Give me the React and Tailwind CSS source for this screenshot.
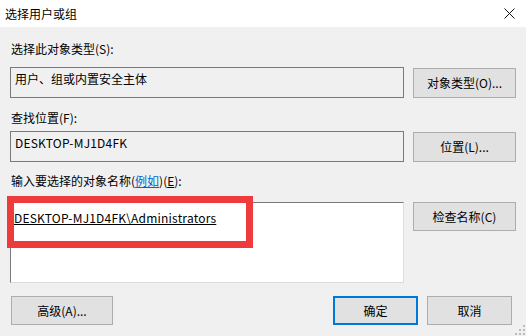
import React from "react";

const font = { fontFamily: '"Noto Sans CJK SC", "Noto Sans", sans-serif' };

function Btn({ children, className = "" }) {
  return (
    <div
      className={`flex items-center justify-center border border-[#adadad] bg-[#e1e1e1] text-[12px] leading-[16px] text-black ${className}`}
    >
      {children}
    </div>
  );
}

export default function App() {
  return (
    <div
      className="relative w-[526px] h-[336px] bg-[#f0f0f0] flex flex-col text-[12px] leading-[16px] text-black overflow-hidden"
      style={font}
    >
      {/* title bar */}
      <div className="h-[27px] bg-white flex items-center justify-between pl-[5px] pr-[11px] shrink-0">
        <span className="text-[12px]">选择用户或组</span>
        <svg width="11" height="11" viewBox="0 0 11 11">
          <path d="M0.5 0.5 L10.5 10.5 M10.5 0.5 L0.5 10.5" stroke="#111" strokeWidth="1" />
        </svg>
      </div>

      <div className="flex flex-col px-[10px]">
        <div className="mt-[14px] h-[16px] pl-[1px]">选择此对象类型(S):</div>

        <div className="mt-[10px] flex gap-[9px]">
          <div className="w-[394px] h-[31px] border border-[#7a7a7a] bg-[#f0f0f0] pl-[4px] pt-[3px]">
            用户、组或内置安全主体
          </div>
          <Btn className="w-[103px] h-[30px] mt-[1px]">对象类型(O)...</Btn>
        </div>

        <div className="mt-[12px] h-[16px] pl-[1px]">查找位置(F):</div>

        <div className="mt-[5px] flex gap-[9px]">
          <div className="w-[394px] h-[31px] border border-[#7a7a7a] bg-[#f0f0f0] pl-[4px] pt-[3px] tracking-[0.2px]">
            DESKTOP-MJ1D4FK
          </div>
          <Btn className="w-[103px] h-[30px] mt-[1px]">位置(L)...</Btn>
        </div>

        <div className="mt-[11px] h-[16px] pl-[1px]">
          输入要选择的对象名称(
          <span className="text-[#0066cc] underline">例如</span>)(
          <span className="underline">E</span>):
        </div>

        <div className="mt-[13px] flex gap-[9px]">
          <div className="relative w-[394px] h-[81px] border border-t-[#7a7a7a] border-l-[#7a7a7a] border-r-[#dcdcdc] border-b-[#dcdcdc] bg-white pl-[3px] pt-[7px]">
            <span className="underline tracking-[0.2px]">DESKTOP-MJ1D4FK\Administrators</span>
            <div className="absolute left-[-4px] top-[-7px] w-[246px] h-[52px] border-[7px] border-[#ef3b3b]" />
          </div>
          <Btn className="w-[103px] h-[29px]">检查名称(C)</Btn>
        </div>

        <div className="mt-[13px] flex items-start">
          <Btn className="ml-[1px] w-[102px] h-[29px]">高级(A)...</Btn>
          <div className="ml-auto flex gap-[9px] mr-[4px]">
            <div className="flex items-center justify-center w-[85px] h-[29px] border-2 border-[#0078d7] bg-[#e1e1e1]">
              确定
            </div>
            <Btn className="w-[85px] h-[29px]">取消</Btn>
          </div>
        </div>
      </div>

      {/* resize grip */}
      <svg className="absolute right-[1px] bottom-[1px]" width="10" height="10" viewBox="0 0 10 10">
        <g fill="#bcbcbc">
          <rect x="8" y="0" width="2" height="2" />
          <rect x="4" y="4" width="2" height="2" />
          <rect x="8" y="4" width="2" height="2" />
          <rect x="0" y="8" width="2" height="2" />
          <rect x="4" y="8" width="2" height="2" />
          <rect x="8" y="8" width="2" height="2" />
        </g>
      </svg>
    </div>
  );
}
